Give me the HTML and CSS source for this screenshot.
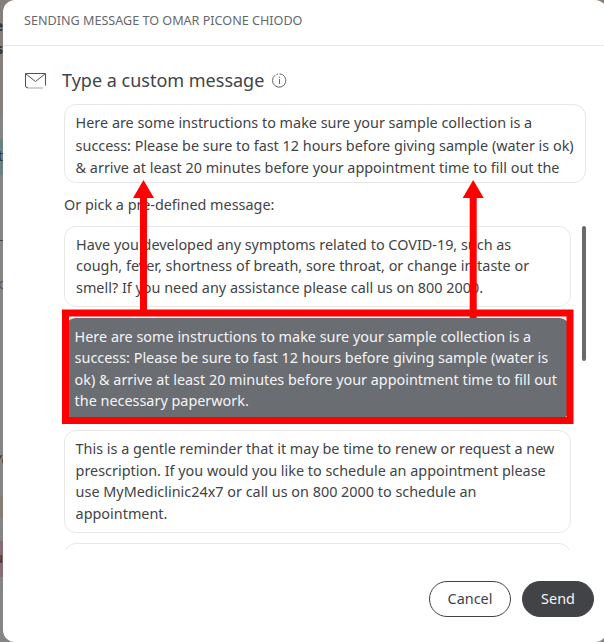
FILE: index.html
```html
<!DOCTYPE html>
<html lang="en">
<head>
<meta charset="utf-8">
<title>Sending message</title>
<link rel="stylesheet" href="styles.css">
</head>
<body>
<div class="backdrop" aria-hidden="true">
  <b class="peek p1">e</b><b class="peek p2">s</b><span class="peek p3">t</span>
  <span class="peek p4">c</span><span class="peek p5">Yo</span><span class="peek p6">u</span>
</div>
<main class="dialog">
  <header class="head">SENDING MESSAGE TO OMAR PICONE CHIODO</header>
  <section class="content">
    <div class="title">
      <svg class="mail" width="22" height="17" viewBox="0 0 22 17" fill="none" stroke="#505155">
        <path d="M3 14.5H2Q.5 14.5.5 13V.5H20.5V12.5" />
        <path d="M1 1L10.5 8.5L20 1" />
        <path d="M2 15H18" stroke="#a5a5a7" />
      </svg>
      <h1>Type a custom message</h1>
      <svg class="info" width="15" height="15" viewBox="0 0 15 15" fill="none" stroke="#66676b">
        <path d="M3.2 2.1A6.7 6.7 0 1 0 7.5.8M4.5 1.4L6 .9" />
        <path d="M7.5 6V11M7.5 3.7V4.8" />
      </svg>
    </div>
    <div class="card editor">Here are some instructions to make sure your sample collection is a<br>success: Please be sure to fast 12 hours before giving sample (water is ok)<br>&amp; arrive at least 20 minutes before your appointment time to fill out the</div>
    <p class="pick">Or pick a pre-defined message:</p>
    <div class="picker">
      <div class="list">
        <div class="card first">Have you developed any symptoms related to COVID-19, such as<br><span class="loose">cough, fever, shortness of breath, sore throat, or change in taste or</span><br>smell? If you need any assistance please call us on 800 2000.</div>
        <div class="card selected">Here are some instructions to make sure your sample collection is a<br>success: Please be sure to fast 12 hours before giving sample (water is<br>ok) &amp; arrive at least 20 minutes before your appointment time to fill out<br>the necessary paperwork.</div>
        <div class="card third">This is a gentle reminder that it may be time to renew or request a new<br>prescription. If you would you like to schedule an appointment please<br>use MyMediclinic24x7 or call us on 800 2000 to schedule an<br>appointment.</div>
        <div class="card next"></div>
      </div>
      <div class="thumb"></div>
    </div>
  </section>
  <footer class="actions">
    <button class="btn cancel">Cancel</button>
    <button class="btn send">Send</button>
  </footer>
</main>
<svg class="annotations" width="604" height="642" viewBox="0 0 604 642" aria-hidden="true">
  <rect x="65.5" y="313" width="504.5" height="107.5" fill="none" stroke="#f00" stroke-width="7" />
  <path fill="#f00" d="M143.5 180L154 198H147V312H140V198H133ZM473.2 180L483.7 198H476.7V318H469.7V198H462.7Z" />
</svg>
</body>
</html>
```
FILE: styles.css
```css
* { box-sizing: border-box; }
body {
  margin: 0;
  width: 604px;
  height: 642px;
  overflow: hidden;
  position: relative;
  padding-left: 3px;
  background: #858585;
  color: #424347;
  font: 14.4px/21.6px "Noto Sans", sans-serif;
}
.backdrop {
  position: absolute;
  left: 0;
  top: 0;
  width: 604px;
  height: 642px;
  overflow: hidden;
  background: linear-gradient(#857e79 0 117px, #858585 117px 139px, #6b8284 139px 175px, #858585 175px 240px, #444 240px 241px, #858585 241px 496px, #857d74 496px 518px, #858585 518px 541px, #876b75 541px 577px, #858585 577px);
}
.peek {
  position: absolute;
  right: 601px;
  color: #333;
  font-size: 14px;
  line-height: 20px;
}
.p1 { top: 16px; }
.p2 { top: 39px; }
.p3 { top: 146px; }
.p4 { top: 274px; right: 599px; color: #555; }
.p5 { top: 450px; right: 594px; }
.p6 { top: 548px; }
.dialog {
  position: relative;
  width: 604px;
  height: 642px;
  display: flex;
  flex-direction: column;
  background: #fff;
  border-radius: 12px;
}
.head {
  height: 46px;
  padding: 10px 21px 0;
  border-bottom: 1px solid #e6e6e7;
  color: #66686e;
  font-size: 12.6px;
  line-height: 21px;
}
.content { padding: 22px 0 0 61px; }
.title {
  display: flex;
  height: 24px;
  margin-left: -39px;
  align-items: center;
}
.title h1 {
  margin: 0 0 0 15px;
  font-size: 18px;
  line-height: 24px;
  font-weight: 400;
  white-space: nowrap;
}
.mail { margin-top: 3px; }
.info { margin-left: 8px; }
.card {
  border: 1px solid #e7e7e8;
  border-radius: 12px;
  padding: 7px 11px;
  background: #fff;
  white-space: nowrap;
  overflow: hidden;
}
.editor {
  width: 522px;
  height: 79px;
  margin-top: 12px;
  padding: 7.2px 10.6px;
  line-height: 22.4px;
}
.pick { margin: 11px 0 0; }
.picker {
  display: flex;
  gap: 11px;
  height: 324px;
  margin-top: 10.4px;
}
.list {
  width: 507px;
  display: flex;
  flex-direction: column;
  gap: 11px;
  overflow: hidden;
}
.list .card { flex: none; }
.first {
  height: 81px;
  line-height: 21.4px;
}
.loose { letter-spacing: .02px; }
.selected {
  height: 101px;
  background: #6a6d72;
  border-color: #6a6d72;
  color: #f5f5f6;
  padding-left: 9.6px;
  line-height: 21.4px;
}
.third {
  height: 103px;
  padding-left: 10.6px;
}
.next {
  height: 80px;
  margin-top: -.6px;
}
.thumb {
  width: 4px;
  height: 135px;
  border-radius: 2px;
  background: #6a6a6d;
}
.actions {
  display: flex;
  justify-content: flex-end;
  gap: 11px;
  margin-top: auto;
  padding: 0 13px 25px;
}
.btn {
  height: 36px;
  border: 1px solid #424347;
  border-radius: 18px;
  font: inherit;
  padding: 0;
}
.cancel {
  width: 82px;
  background: #fff;
  color: #424347;
}
.send {
  width: 72px;
  background: #424347;
  color: #f5f5f6;
}
.annotations {
  position: absolute;
  left: 0;
  top: 0;
}
```
